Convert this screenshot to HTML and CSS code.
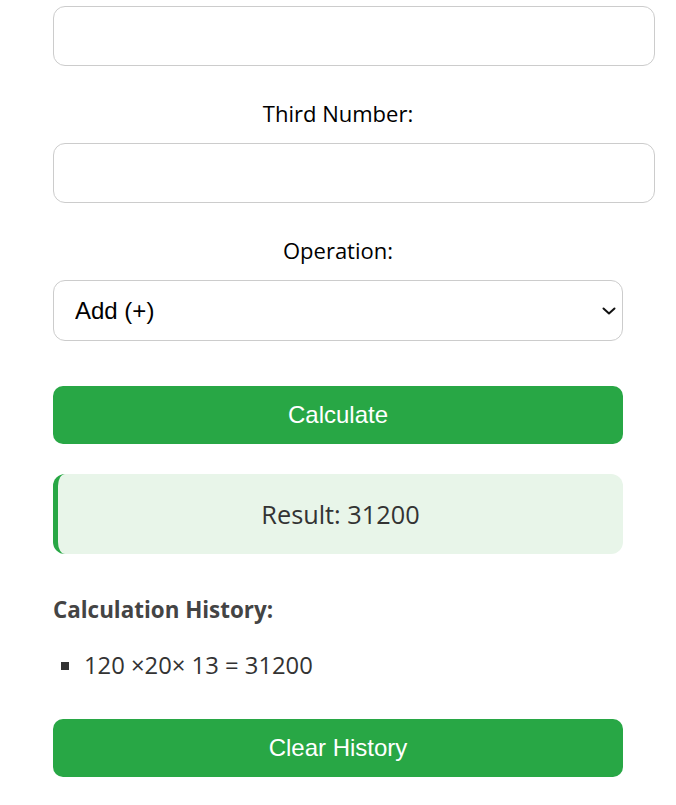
FILE: index.html
```html
<!DOCTYPE html>
<html lang="en">
<head>
<meta charset="utf-8">
<title>Calculator</title>
<link rel="stylesheet" href="styles.css">
</head>
<body>
<div class="container">
  <div class="group">
    <input class="field" type="number">
  </div>
  <div class="group">
    <label class="label">Third Number:</label>
    <input class="field" type="number">
  </div>
  <div class="group">
    <label class="label">Operation:</label>
    <div class="select-wrap">
      <select class="select">
        <option>Add (+)</option>
        <option>Subtract (-)</option>
        <option>Multiply (×)</option>
        <option>Divide (÷)</option>
      </select>
      <svg class="chevron" width="14" height="8" viewBox="0 0 14 8" aria-hidden="true">
        <path d="M1.5 1.5 L7 6.5 L12.5 1.5" fill="none" stroke="#111" stroke-width="2" stroke-linecap="round" stroke-linejoin="round"/>
      </svg>
    </div>
  </div>
  <button class="btn btn-calc">Calculate</button>
  <div class="result">Result: 31200</div>
  <h3 class="history-title">Calculation History:</h3>
  <ul class="history">
    <li>120 ×20× 13 = 31200</li>
  </ul>
  <button class="btn btn-clear">Clear History</button>
</div>
</body>
</html>
```
FILE: styles.css
```css
html, body {
  margin: 0;
  padding: 0;
  background: #fff;
}
body {
  font-family: "Open Sans", "Noto Sans", sans-serif;
}
.container {
  width: 570px;
  margin: 0 auto;
  padding-top: 6px;
}
.group {
  margin-bottom: 32px;
}
.group:nth-child(3) {
  margin-bottom: 0;
}
.label {
  display: block;
  text-align: center;
  font-size: 22px;
  line-height: 30px;
  color: #000;
  margin-bottom: 15px;
}
.field {
  display: block;
  width: 100%;
  padding: 15px;
  font-size: 24px;
  font-family: "Liberation Sans", Arial, sans-serif;
  border: 1px solid #ccc;
  border-radius: 12px;
  box-sizing: content-box;
  height: 28px;
  margin: 0;
}
.select-wrap {
  position: relative;
}
.select {
  display: block;
  width: 100%;
  height: 61px;
  padding: 0 40px 0 21px;
  font-size: 24px;
  font-family: "Liberation Sans", Arial, sans-serif;
  border: 1px solid #ccc;
  border-radius: 12px;
  background: #fff;
  color: #000;
  margin: 0;
  appearance: none;
  -webkit-appearance: none;
}
.chevron {
  position: absolute;
  right: 7px;
  top: 27px;
  pointer-events: none;
}
.btn {
  display: block;
  width: 100%;
  height: 58px;
  border: none;
  border-radius: 10px;
  background: #28a745;
  color: #fff;
  font-size: 24px;
  font-family: "Liberation Sans", Arial, sans-serif;
  padding: 0;
}
.btn-calc {
  margin-top: 45px;
}
.result {
  margin-top: 30px;
  height: 80px;
  box-sizing: border-box;
  background: #e8f5e9;
  border-left: 5px solid #28a745;
  border-radius: 12px;
  font-size: 25.3px;
  line-height: 80px;
  text-align: center;
  color: #333;
}
.history-title {
  margin: 41px 0 0;
  font-size: 22.4px;
  line-height: 30px;
  font-weight: 700;
  color: #444;
}
.history {
  margin: 25px 0 0;
  padding-left: 31px;
  list-style: square;
  font-size: 23.8px;
  line-height: 30px;
  color: #333;
}
.btn-clear {
  margin-top: 39px;
}
```
